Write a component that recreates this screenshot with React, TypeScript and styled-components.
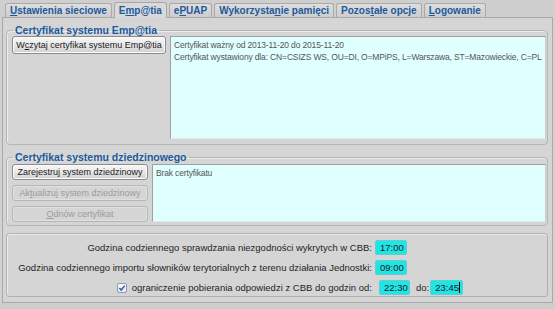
import React from 'react'
import styled, { createGlobalStyle } from 'styled-components'

const GlobalStyle = createGlobalStyle`
  html, body {
    margin: 0;
    padding: 0;
    background: #d2d2d2;
  }
  body {
    font-family: Tahoma, "Liberation Sans", Arial, sans-serif;
    font-size: 9.5px;
  }
`

const Window = styled.div`
  width: 555px;
  height: 309px;
  background: #d2d2d2;
  display: flex;
  flex-direction: column;
  overflow: hidden;
`

const TabBar = styled.div`
  display: flex;
  align-items: flex-end;
  height: 17px;
  padding-left: 5px;
  background: #cfcfcf;
`

const Tab = styled.div<{ $active?: boolean }>`
  height: ${(p) => (p.$active ? 15 : 13)}px;
  margin-right: 2px;
  padding: 0 4px;
  border: 1px solid #a9a9a9;
  border-bottom: none;
  border-radius: 3px 3px 0 0;
  background: ${(p) => (p.$active ? '#d9d9d9' : 'linear-gradient(#dedede, #cdcdcd)')};
  color: #1c5a9c;
  font-weight: bold;
  font-size: 10px;
  line-height: ${(p) => (p.$active ? 15 : 13)}px;
  white-space: nowrap;
  margin-bottom: ${(p) => (p.$active ? -1 : 0)}px;
  position: relative;
`

const U = styled.span`
  text-decoration: underline;
`

const Page = styled.div`
  margin: 0 2px;
  height: 286px;
  border: 1px solid #a9a9a9;
  background: #d5d5d5;
  padding: 6px 4px 0 3px;
  display: flex;
  flex-direction: column;
  box-sizing: border-box;
`

const Group = styled.fieldset<{ $mt?: number }>`
  margin: ${(p) => p.$mt ?? 0}px 0 0 0;
  min-width: 0;
  padding: 0 1px 0 5px;
  border: 1px solid #b5b5b5;
  border-radius: 4px;
  box-shadow: inset 1px 1px 0 #ececec;
`

const Legend = styled.legend`
  padding: 0 2px;
  margin-left: 1px;
  color: #1c5a9c;
  font-weight: bold;
  font-size: 10.5px;
  line-height: 12px;
`

const GroupBody = styled.div<{ $top: number; $bottom: number }>`
  display: flex;
  gap: 4px;
  padding-top: ${(p) => p.$top}px;
  padding-bottom: ${(p) => p.$bottom}px;
`

const ButtonColumn = styled.div<{ $width: number }>`
  width: ${(p) => p.$width}px;
  display: flex;
  flex-direction: column;
  gap: 5px;
  flex-shrink: 0;
`

const Button = styled.button<{ $h: number }>`
  height: ${(p) => p.$h}px;
  margin: 0;
  padding: 0;
  font-family: inherit;
  font-size: 9px;
  color: #1a1a1a;
  white-space: nowrap;
  border: 1px solid #8c8c8c;
  border-radius: 3px;
  background: linear-gradient(#f8f8f8, #e6e6e6 55%, #d0d0d0);
  box-shadow: inset 0 0 0 1px #fbfbfb;
  &:disabled {
    color: #9b9b9b;
    background: #d5d5d5;
    border-color: #b6b6b6;
    box-shadow: inset 0 0 0 1px #e0e0e0;
  }
`

const InfoBox = styled.div<{ $h: number }>`
  flex: 1;
  min-width: 0;
  height: ${(p) => p.$h}px;
  box-sizing: border-box;
  background: #e0ffff;
  border: 1px solid #a0a0a0;
  border-right-color: #c8c8c8;
  border-bottom-color: #e8e8e8;
  padding: 2px 3px;
  color: #555;
  font-size: 8.5px;
  letter-spacing: -0.15px;
  line-height: 12px;
  white-space: nowrap;
  overflow: hidden;
`

const Settings = styled.div`
  margin-top: 7px;
  border: 1px solid #b0b0b0;
  border-radius: 3px;
  box-shadow: inset 1px 1px 0 #ececec;
  padding: 6px 0 1px 0;
  display: grid;
  grid-template-columns: 365px auto auto auto;
  justify-content: start;
  column-gap: 3px;
  row-gap: 5px;
  align-items: center;
`

const Label = styled.label`
  justify-self: end;
  color: #1e1e1e;
  font-size: 9.5px;
  white-space: nowrap;
  display: flex;
  align-items: center;
  gap: 5px;
`

const TimeField = styled.div<{ $w: number; $shift?: number }>`
  width: ${(p) => p.$w}px;
  height: 15px;
  margin-left: ${(p) => p.$shift ?? 0}px;
  box-sizing: border-box;
  background: #21e4e4;
  border: 1px solid #5fd0d0;
  border-radius: 2px;
  font-size: 9.5px;
  line-height: 13px;
  color: #1a1a1a;
  padding-left: 4px;
  justify-self: start;
`

const Caret = styled.span`
  display: inline-block;
  width: 1px;
  height: 11px;
  background: #000;
  vertical-align: -2px;
`

const Check = styled.span`
  width: 10px;
  height: 10px;
  box-sizing: border-box;
  border: 1px solid #8e9aa8;
  border-radius: 2px;
  background: linear-gradient(#ffffff, #e4e9ef);
  display: inline-flex;
  align-items: center;
  justify-content: center;
`

const SmallText = styled.span`
  font-size: 9.5px;
  color: #1e1e1e;
  margin-left: 3px;
`

const BottomStrip = styled.div`
  flex: 1;
  background: #cdcdcd;
`

export default function App() {
  return (
    <Window>
      <GlobalStyle />
      <TabBar>
        <Tab><U>U</U>stawienia sieciowe</Tab>
        <Tab $active>E<U>m</U>p@tia</Tab>
        <Tab>e<U>P</U>UAP</Tab>
        <Tab>Wykorzysta<U>n</U>ie pamięci</Tab>
        <Tab>Pozos<U>t</U>ałe opcje</Tab>
        <Tab><U>L</U>ogowanie</Tab>
      </TabBar>
      <Page>
        <Group>
          <Legend>Certyfikat systemu Emp@tia</Legend>
          <GroupBody $top={0} $bottom={5}>
            <ButtonColumn $width={154}>
              <Button $h={18}>W<U>c</U>zytaj certyfikat systemu Emp@tia</Button>
            </ButtonColumn>
            <InfoBox $h={103}>
              Certyfikat ważny od 2013-11-20 do 2015-11-20
              <br />
              Certyfikat wystawiony dla: CN=CSIZS WS, OU=DI, O=MPiPS, L=Warszawa, ST=Mazowieckie, C=PL
            </InfoBox>
          </GroupBody>
        </Group>
        <Group $mt={6}>
          <Legend>Certyfikat systemu dziedzinowego</Legend>
          <GroupBody $top={1} $bottom={3}>
            <ButtonColumn $width={136}>
              <Button $h={16}>Zare<U>j</U>estruj system dziedzinowy</Button>
              <Button $h={16} disabled>Ak<U>t</U>ualizuj system dziedzinowy</Button>
              <Button $h={16} disabled><U>O</U>dnów certyfikat</Button>
            </ButtonColumn>
            <InfoBox $h={58}>Brak certyfikatu</InfoBox>
          </GroupBody>
        </Group>
        <Settings>
          <Label>Godzina codziennego sprawdzania niezgodności wykrytych w CBB:</Label>
          <TimeField $w={32}>17:00</TimeField>
          <span />
          <span />
          <Label>Godzina codziennego importu słowników terytorialnych z terenu działania Jednostki:</Label>
          <TimeField $w={32}>09:00</TimeField>
          <span />
          <span />
          <Label>
            <Check>
              <svg width="8" height="8" viewBox="0 0 9 9">
                <path d="M1.5 4.5 L3.6 6.8 L7.6 1.8" fill="none" stroke="#2b5fb0" strokeWidth="1.7" />
              </svg>
            </Check>
            ograniczenie pobierania odpowiedzi z CBB do godzin od:
          </Label>
          <TimeField $w={31} $shift={4}>22:30</TimeField>
          <SmallText>do:</SmallText>
          <TimeField $w={33} $shift={-2}>23:45<Caret /></TimeField>
        </Settings>
      </Page>
      <BottomStrip />
    </Window>
  )
}
